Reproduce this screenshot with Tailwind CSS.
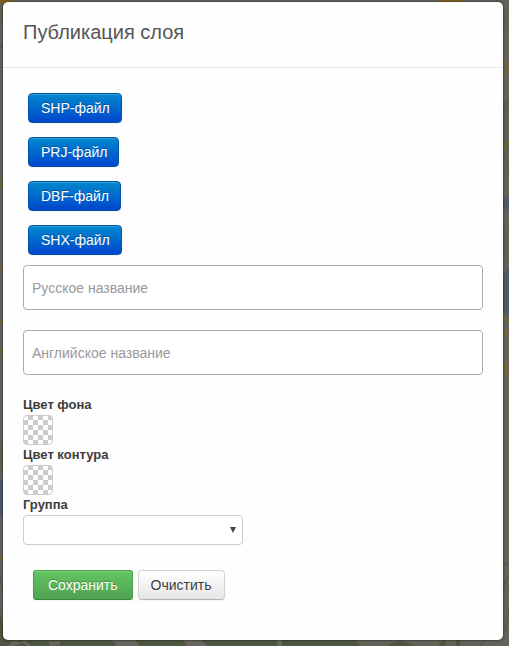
<!DOCTYPE html>
<html lang="ru">
<head>
<meta charset="utf-8">
<meta name="viewport" content="width=device-width, initial-scale=1">
<title>Публикация слоя</title>
<script src="https://cdn.jsdelivr.net/npm/@tailwindcss/browser@4"></script>
</head>
<body class="relative min-h-screen overflow-x-hidden bg-[#64635a] pt-[2px] pr-[6px] pb-[6px] pl-[3px] font-['Liberation_Sans',Arial,sans-serif] text-sm text-[#3c3c3c]">
  <!-- Dimmed map behind the dialog -->
  <svg class="absolute inset-0 h-full w-full" viewBox="0 0 509 646" preserveAspectRatio="none" aria-hidden="true">
    <rect width="509" height="646" fill="#64635a"/>
    <path d="M0 0H14L8 4H0ZM440 0H461V3H440Z" fill="#7e6221"/>
    <path d="M0 10H3V18H0ZM0 445H3V468H0ZM503 100H509V175L503 160ZM503 225L509 238V258H503ZM503 10H509V30H503Z" fill="#5c6150"/>
    <path d="M0 480H3V518H0ZM503 198L509 196V209H503ZM503 276L509 268V318L503 312Z" fill="#50596a"/>
    <path d="M0 612L3 626V639H250V646H0ZM250 639H355L360 646H250ZM388 646Q398 637 415 646ZM438 646L443 639H446V646ZM456 640H460V646H456Z" fill="#4c5641"/>
    <path d="M8 646L14 640L20 643L25 640L31 646H28L23 643L14 646ZM49 646V641H60V645ZM112 640H134L141 646H116ZM183 639H200L208 646H187ZM277 640H282V646H277Z" fill="#67655e"/>
    <path d="M503 60L510 68L503 76M503 148L509 142M503 314L509 322M503 336L509 330M503 367L509 363M503 364L509 378M0 183L3 186M0 265L3 269M0 321H3M0 350L3 353M0 558H3" fill="none" stroke="#7b632a" stroke-width="2"/>
    <path d="M503 106L509 101M503 587L509 575M505 632L509 609M503 562L509 566M0 47H3M0 575L3 590M464 646V642M480 646L484 640" fill="none" stroke="#535249"/>
  </svg>

  <section role="dialog" aria-labelledby="dialog-title" class="relative rounded-[5px] bg-[#fefefe] shadow-[0_0_2px_1px_rgba(0,0,0,0.35)]">
    <header class="border-b border-[#e8e8e8] px-5 pt-[15px] pb-5">
      <h1 id="dialog-title" class="text-xl leading-[30px] text-[#555]">Публикация слоя</h1>
    </header>

    <form class="flex flex-col px-5 pt-[25px] pb-10">
      <div class="flex flex-col items-start gap-[14px] pl-[5px]">
        <button type="button" class="h-[30px] rounded border border-[#0054a8] bg-linear-to-b from-[#0088cc] to-[#0044cc] pr-[11px] pl-3 text-white shadow-[inset_0_1px_0_rgba(255,255,255,0.2),0_1px_2px_rgba(0,0,0,0.05)] text-shadow-[0_-1px_0_rgba(0,0,0,0.25)]">SHP-файл</button>
        <button type="button" class="h-[30px] rounded border border-[#0054a8] bg-linear-to-b from-[#0088cc] to-[#0044cc] pr-[11px] pl-3 text-white shadow-[inset_0_1px_0_rgba(255,255,255,0.2),0_1px_2px_rgba(0,0,0,0.05)] text-shadow-[0_-1px_0_rgba(0,0,0,0.25)]">PRJ-файл</button>
        <button type="button" class="h-[30px] rounded border border-[#0054a8] bg-linear-to-b from-[#0088cc] to-[#0044cc] pr-[11px] pl-3 text-white shadow-[inset_0_1px_0_rgba(255,255,255,0.2),0_1px_2px_rgba(0,0,0,0.05)] text-shadow-[0_-1px_0_rgba(0,0,0,0.25)]">DBF-файл</button>
        <button type="button" class="h-[30px] rounded border border-[#0054a8] bg-linear-to-b from-[#0088cc] to-[#0044cc] pr-[11px] pl-3 text-white shadow-[inset_0_1px_0_rgba(255,255,255,0.2),0_1px_2px_rgba(0,0,0,0.05)] text-shadow-[0_-1px_0_rgba(0,0,0,0.25)]">SHX-файл</button>
      </div>

      <div class="mt-[10px] flex flex-col gap-5">
        <input type="text" aria-label="Русское название" placeholder="Русское название" class="h-[45px] w-full rounded border border-[#aaa] bg-white px-2 placeholder:text-[#999]">
        <input type="text" aria-label="Английское название" placeholder="Английское название" class="h-[45px] w-full rounded border border-[#aaa] bg-white px-2 placeholder:text-[#999]">
      </div>

      <div class="mt-5 flex flex-col items-start">
        <label for="fill" class="text-[13px] leading-5 font-bold">Цвет фона</label>
        <button type="button" id="fill" class="size-[30px] rounded border border-[#ccc] bg-[conic-gradient(#ccc_25%,#fff_0_50%,#ccc_0_75%,#fff_0)] bg-size-[10px_10px] bg-origin-border"></button>
        <label for="stroke" class="text-[13px] leading-5 font-bold">Цвет контура</label>
        <button type="button" id="stroke" class="size-[30px] rounded border border-[#ccc] bg-[conic-gradient(#ccc_25%,#fff_0_50%,#ccc_0_75%,#fff_0)] bg-size-[10px_10px] bg-origin-border"></button>
        <label for="group" class="text-[13px] leading-5 font-bold">Группа</label>
        <div class="relative w-[220px] max-w-full">
          <select id="group" class="block h-[30px] w-full appearance-none rounded border border-[#ccc] bg-white px-2"><option></option></select>
          <svg class="pointer-events-none absolute top-[12px] right-[7px]" width="6" height="6" viewBox="0 0 6 6" aria-hidden="true"><path d="M0 0H6L3 6Z" fill="#444"/></svg>
        </div>
      </div>

      <div class="mt-[25px] flex gap-[5px] pl-[10px]">
        <button type="submit" class="h-[30px] rounded-[3px] border border-[#46a046] border-b-[#3c873c] bg-linear-to-b from-[#62c462] to-[#51a351] px-[14px] text-white shadow-[inset_0_1px_0_rgba(255,255,255,0.2),0_1px_2px_rgba(0,0,0,0.05)] text-shadow-[0_-1px_0_rgba(0,0,0,0.25)]">Сохранить</button>
        <button type="reset" class="h-[30px] rounded border border-[#d2d2d2] border-b-[#b3b3b3] bg-linear-to-b from-white to-[#e6e6e6] px-3 shadow-[inset_0_1px_0_rgba(255,255,255,0.2),0_1px_2px_rgba(0,0,0,0.05)] text-shadow-[0_1px_1px_rgba(255,255,255,0.75)]">Очистить</button>
      </div>
    </form>
  </section>
</body>
</html>
